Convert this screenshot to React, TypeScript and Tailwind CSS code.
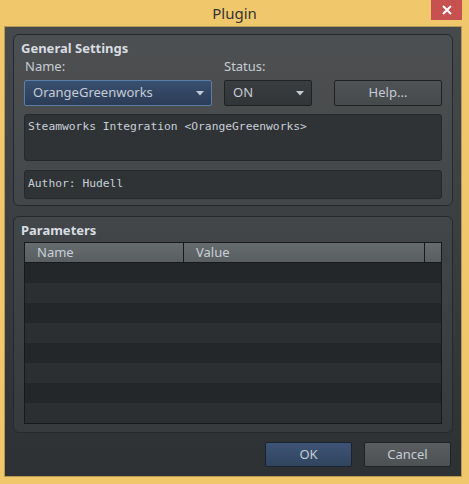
const ui = { fontFamily: '"Noto Sans", "Open Sans", sans-serif' };
const mono = { fontFamily: '"DejaVu Sans Mono", "Liberation Mono", monospace' };

const Caret = () => (
  <svg width="8" height="5" viewBox="0 0 8 5" className="shrink-0">
    <path d="M0 0 H8 L4 4.5 Z" fill="#c3cad1" />
  </svg>
);

const GroupBox = ({ title, className, children }: { title: string; className: string; children: React.ReactNode }) => (
  <div className={`mx-[8px] flex flex-col rounded-[6px] border border-[#26292b] bg-white/[0.035] px-[10px] ${className}`}>
    <div className="-ml-[3px] text-[13px] leading-[16px] font-bold text-[#d8dde2]">{title}</div>
    {children}
  </div>
);

export default function App() {
  const rows = Array.from({ length: 8 }, (_, i) => i);

  return (
    <div className="flex h-[484px] w-[469px] flex-col bg-[#f0c86b]" style={ui}>
      {/* caption */}
      <div className="relative flex h-[26px] shrink-0 items-center justify-center">
        <span className="text-[15px] leading-none text-[#333]">Plugin</span>
        <div className="absolute top-0 right-[7px] flex h-[20px] w-[31px] items-center justify-center bg-[#c75050]">
          <svg width="10" height="10" viewBox="0 0 10 10">
            <path d="M1 1 L9 9 M9 1 L1 9" stroke="#fff" strokeWidth="2" />
          </svg>
        </div>
      </div>

      <div className="mr-[7px] mb-[7px] ml-[4px] flex flex-1 flex-col border border-[#b59a55]">
        <div className="flex flex-1 flex-col bg-gradient-to-b from-[#474a4c] to-[#2e3134] pt-[7px]">
          <GroupBox title="General Settings" className="h-[172px] pt-[5px]">
            <div className="mt-[2px] flex text-[13px] leading-[16px] text-[#c5ccd3]">
              <span className="w-[200px] pl-[1px]">Name:</span>
              <span>Status:</span>
            </div>
            <div className="mt-[6px] flex h-[26px] text-[13px] text-[#c5ccd3]">
              <div className="flex w-[188px] items-center justify-between rounded-[2px] border border-[#5b7ea6] bg-gradient-to-b from-[#395070] to-[#2b3c56] pr-[7px] pl-[8px]">
                <span>OrangeGreenworks</span>
                <Caret />
              </div>
              <div className="ml-[12px] flex w-[88px] items-center justify-between rounded-[2px] border border-[#1f2123] bg-gradient-to-b from-[#3b3e41] to-[#323538] pr-[7px] pl-[8px]">
                <span>ON</span>
                <Caret />
              </div>
              <div className="ml-[22px] flex w-[108px] items-center justify-center rounded-[2px] border border-[#1f2123] bg-gradient-to-b from-[#4f5356] to-[#464a4d]">
                Help...
              </div>
            </div>
            <div className="mt-[8px] h-[47px] rounded-[3px] border border-[#26282a] bg-[#303336] px-[3px] pt-[5px] text-[11.3px] leading-[14px] text-[#c8d0d8]" style={mono}>
              Steamworks Integration &lt;OrangeGreenworks&gt;
            </div>
            <div className="mt-[9px] flex h-[29px] items-center rounded-[3px] border border-[#26282a] bg-[#303336] px-[3px] text-[11.3px] text-[#c8d0d8]" style={mono}>
              Author: Hudell
            </div>
          </GroupBox>

          <GroupBox title="Parameters" className="mt-[10px] h-[217px] pt-[5px]">
            <div className="mt-[4px] flex flex-col border border-[#17191b]">
              <div className="flex h-[20px] border-b border-[#17191b] bg-gradient-to-b from-[#666b6e] to-[#595e61] text-[13px] leading-[19px] text-[#c8d0d8]">
                <div className="w-[159px] border-r border-[#17191b] pl-[12px]">Name</div>
                <div className="flex-1 border-r border-[#17191b] pl-[12px]">Value</div>
                <div className="w-[16px]" />
              </div>
              {rows.map((i) => (
                <div key={i} className={`h-[20px] ${i % 2 === 0 ? "bg-[#24272a]" : "bg-[#2c2f32]"}`} />
              ))}
            </div>
          </GroupBox>

          <div className="mt-[9px] mr-[10px] flex justify-end gap-[12px] text-[13px] text-[#c5ccd3]">
            <div className="flex h-[25px] w-[87px] items-center justify-center rounded-[2px] border border-[#1c2330] bg-gradient-to-b from-[#3d5476] to-[#31455f]">
              OK
            </div>
            <div className="flex h-[25px] w-[87px] items-center justify-center rounded-[2px] border border-[#1f2123] bg-gradient-to-b from-[#5a5e61] to-[#4d5154]">
              Cancel
            </div>
          </div>
        </div>
      </div>
    </div>
  );
}
